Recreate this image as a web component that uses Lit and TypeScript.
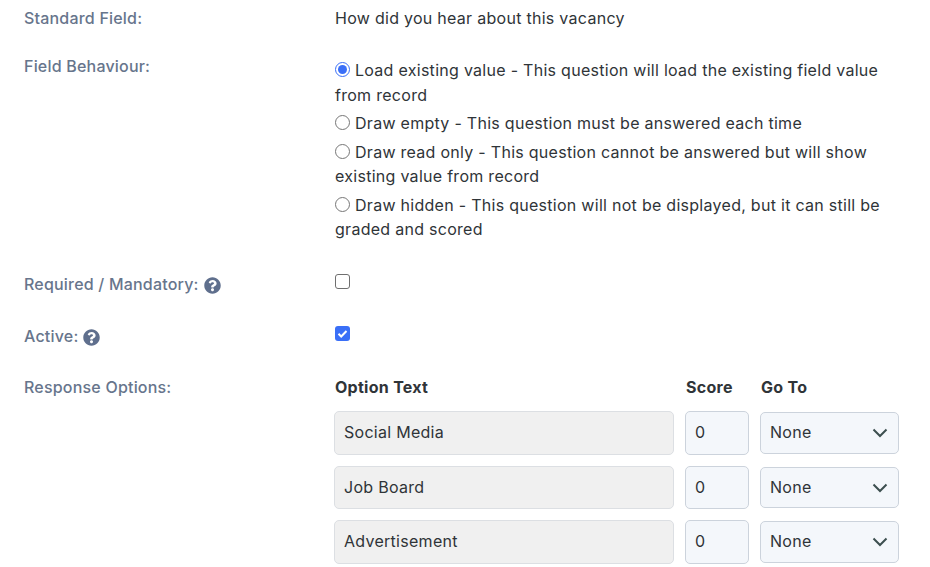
import { LitElement, html, css } from "lit";
import { customElement } from "lit/decorators.js";

const help = html`<svg class="help" viewBox="0 0 512 512" width="17" height="17" aria-hidden="true"><path fill="#5f6f8d" d="M504 256c0 137-111 248-248 248S8 393 8 256 119 8 256 8s248 111 248 248zM262.700 90c-54.500 0-89.300 23-116.500 63.800-3.500 5.300-2.400 12.400 2.700 16.300l34.700 26.300c5.200 3.900 12.600 3 16.700-2.100 17.900-22.700 30.100-35.800 57.300-35.800 20.400 0 45.700 13.100 45.700 33 0 15-12.400 22.700-32.700 34-23.600 13.300-54.900 29.800-54.900 71.100V302c0 6.600 5.400 12 12 12h56c6.600 0 12-5.400 12-12v-1.300c0-28.700 83.800-29.900 83.800-107.500C380.600 134.800 319.900 90 262.700 90zM256 338c-25.500 0-46.300 20.800-46.300 46.300 0 25.500 20.800 46.300 46.300 46.300s46.300-20.800 46.300-46.300c0-25.500-20.800-46.300-46.300-46.300z"/></svg>`;

const behaviours: [string, boolean][] = [
  ["Load existing value - This question will load the existing field value from record", true],
  ["Draw empty - This question must be answered each time", false],
  ["Draw read only - This question cannot be answered but will show existing value from record", false],
  ["Draw hidden - This question will not be displayed, but it can still be graded and scored", false],
];
const options = ["Social Media", "Job Board", "Advertisement"];

@customElement("app-root")
export class AppRoot extends LitElement {
  static styles = css`
    :host { display: block; width: 930px; height: 567px; overflow: hidden; background: #fff;
      font-family: "Inter", sans-serif; font-size: 16px; letter-spacing: 0.28px; line-height: 24.500px; color: #2f3438; }
    .form { display: grid; grid-template-columns: 311px 564px; padding: 6px 0 0 24px; }
    .label { color: #67758c; font-weight: 500; letter-spacing: 0.2px; display: flex; align-items: flex-start; gap: 5px; }
    .help { margin-top: 5px; flex: none; }
    .value { min-width: 0; }
    .r1 { height: 48px; }
    .r2 { height: 216px; }
    .radios { padding-top: 4.400px; box-sizing: border-box; }
    .radio { display: block; margin-bottom: 4px; }
    .radio input { width: 15px; height: 15px; margin: 0 5px 0 0; vertical-align: -1px; accent-color: #3a6ff7; }
    .r3 { height: 52px; padding-top: 2px; box-sizing: border-box; }
    .value.r3 { padding-top: 4px; }
    .box { appearance: none; display: block; width: 15px; height: 15px; margin: 0; border: 1px solid #6f6f6f; border-radius: 3px; background: #fff; box-sizing: border-box; }
    .checked { display: block; width: 15px; height: 15px; }
    .r5 { padding-top: 1px; }
    .grid { display: grid; grid-template-columns: 340px 64px 139px; column-gap: 11px; row-gap: 11px; margin-left: -1px; align-items: center; }
    .head { font-weight: 700; height: 25px; padding-left: 1px; }
    .field { box-sizing: border-box; height: 44px; border: 1px solid #ccd3dc; border-radius: 5px; padding: 0 9px 2px; font: inherit; letter-spacing: inherit; color: #2f3438; width: 100%; margin: 0; }
    .field.short { height: 43px; }
    .ro { background: #f0f0f0; border-color: #dcdfe3; }
    .num { background: #f4f7fb; }
    .sel { height: 42px; background: #f4f7fb; display: flex; align-items: center; justify-content: space-between; padding: 0 10px 0 9px; }
    .sel span { padding-bottom: 1px; }
    .sel.short { height: 41px; }
    .sel svg { flex: none; }
  `;

  render() {
    return html`<div class="form">
      <div class="label r1">Standard Field:</div>
      <div class="value r1">How did you hear about this vacancy</div>

      <div class="label r2">Field Behaviour:</div>
      <div class="value r2 radios">
        ${behaviours.map(([t, c]) => html`<label class="radio"><input type="radio" name="b" ?checked=${c} />${t}</label>`)}
      </div>

      <div class="label r3">Required / Mandatory: ${help}</div>
      <div class="value r3"><input class="box" type="checkbox" aria-label="Required" /></div>

      <div class="label r3">Active: ${help}</div>
      <div class="value r3">
        <svg class="checked" viewBox="0 0 15 15"><rect width="15" height="15" rx="3" fill="#3a6ff7"/><path d="M3.500 7.800l2.700 2.700 5.300-5.500" fill="none" stroke="#fff" stroke-width="2"/></svg>
      </div>

      <div class="label r5">Response Options:</div>
      <div class="value r5">
        <div class="grid">
          <div class="head">Option Text</div><div class="head">Score</div><div class="head">Go To</div>
          ${options.map((o, i) => {
            const s = i === 1 ? "short" : "";
            return html`
            <input class="field ro ${s}" readonly .value=${o} aria-label="Option text" />
            <input class="field num ${s}" .value=${"0"} aria-label="Score" />
            <div class="field sel ${s}"><span>None</span>
              <svg width="16" height="10" viewBox="0 0 16 10"><path d="M1.500 1.500L8 8l6.500-6.500" fill="none" stroke="#3c4f4f" stroke-width="2"/></svg>
            </div>`;
          })}
        </div>
      </div>
    </div>`;
  }
}
